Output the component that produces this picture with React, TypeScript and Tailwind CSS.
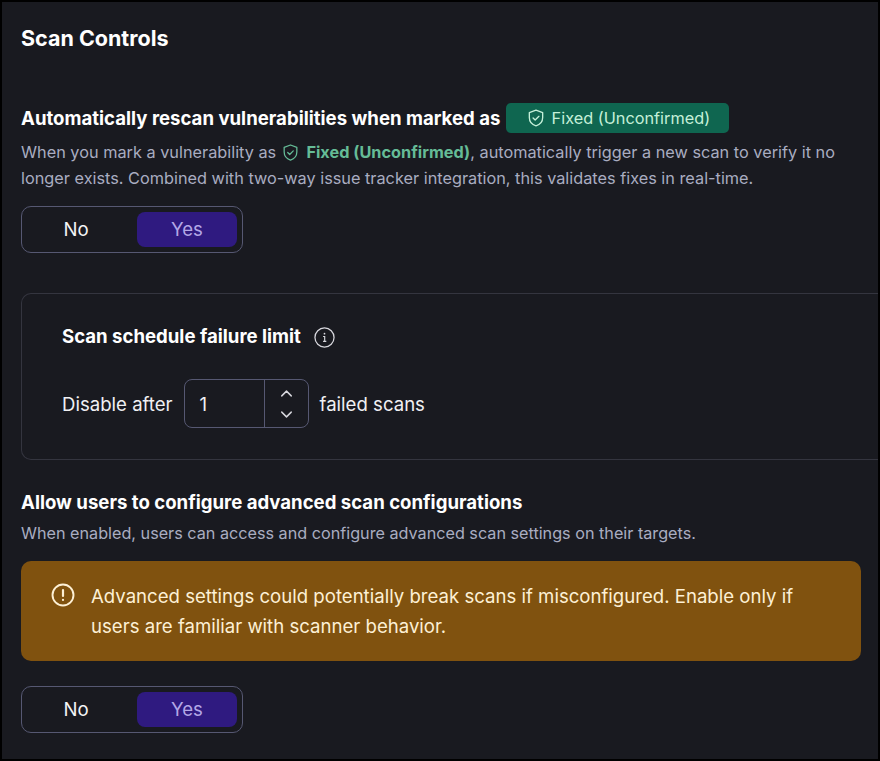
import { ChevronDown, ChevronUp } from "lucide-react";

function ShieldCheck({ className }: { className?: string }) {
  return (
    <svg viewBox="0 0 24 24" fill="none" stroke="currentColor" strokeWidth="1.6" strokeLinecap="round" strokeLinejoin="round" className={className}>
      <path d="M12 2.500l8 3v6c0 5-3.400 8.600-8 10-4.600-1.400-8-5-8-10v-6z" />
      <path d="M8.500 12l2.500 2.500 4.500-4.500" />
    </svg>
  );
}

function YesNo() {
  return (
    <div className="flex h-[47px] w-[222px] items-center rounded-[10px] border border-[#565872] p-[5px] text-[18.6px] leading-none">
      <div className="flex h-[35px] flex-1 items-center justify-center pr-[12px] text-[#f4f4f6]">No</div>
      <div className="flex h-[35px] w-[100px] items-center justify-center rounded-lg bg-[#2f1a80] text-[#b3a7e6]">Yes</div>
    </div>
  );
}

export default function App() {
  return (
    <div className="h-[761px] w-[880px] overflow-hidden border-2 border-black bg-[#191a20] font-['Inter','Noto_Sans',sans-serif]">
      <div className="pl-[19px] pt-[23px]">
        <h2 className="h-[26px] text-[21.5px] font-bold leading-[26px] text-white">Scan Controls</h2>

        <div className="mt-[52px] flex h-[30px] items-center gap-[6px]">
          <span className="whitespace-nowrap pt-[1px] text-[18.6px] font-bold text-white">Automatically rescan vulnerabilities when marked as</span>
          <span className="flex h-[30px] w-[223px] shrink-0 items-center justify-center gap-[6px] rounded-[5px] bg-[#0f6650] text-[16.3px] text-[#c5f0d9]">
            <ShieldCheck className="size-[20px]" />
            Fixed (Unconfirmed)
          </span>
        </div>
        <p className="mt-[6px] w-[830px] text-[16.3px] leading-[26px] text-[#a9adc1]">
          When you mark a vulnerability as{" "}
          <ShieldCheck className="mr-[2px] inline size-[19px] align-[-4px] text-[#65bc97]" />{" "}
          <span className="font-bold text-[#65bc97]">Fixed (Unconfirmed)</span>, automatically trigger a new scan to verify it no longer exists. Combined with two-way issue tracker integration, this validates fixes in real-time.
        </p>

        <div className="mt-[15px]">
          <YesNo />
        </div>

        <div className="mt-[40px] h-[167px] rounded-l-[10px] border border-r-0 border-[#34353f] pl-[40px] pt-[29px]">
          <div className="flex h-[28px] items-center gap-[13px]">
            <span className="text-[18.6px] font-bold text-white">Scan schedule failure limit</span>
            <svg viewBox="0 0 22 22" fill="none" stroke="currentColor" className="size-[21px] text-[#d8d8de]">
              <circle cx="11" cy="11" r="10" strokeWidth="1.300" />
              <path d="M9.500 10h1.700v5M9.500 15h3.400" strokeWidth="1.200" />
              <circle cx="11" cy="7" r="0.900" fill="currentColor" stroke="none" />
            </svg>
          </div>
          <div className="mt-[28px] flex items-center text-[18.6px] text-[#f0f0f3]">
            <span className="pt-[2px]">Disable after</span>
            <div className="ml-[11px] flex h-[49px] w-[125px] rounded-lg border border-[#565872]">
              <div className="flex w-[79px] items-center pl-[15px] pt-[2px]">1</div>
              <div className="flex flex-1 flex-col items-center justify-center gap-[2px] border-l border-[#565872] text-[#d8d8de]">
                <ChevronUp className="size-[19px]" strokeWidth={1.800} />
                <ChevronDown className="size-[19px]" strokeWidth={1.800} />
              </div>
            </div>
            <span className="ml-[11px] pt-[2px]">failed scans</span>
          </div>
        </div>

        <h3 className="mt-[29px] text-[18.6px] font-bold leading-[26px] text-white">Allow users to configure advanced scan configurations</h3>
        <p className="mt-[5px] text-[16.2px] leading-[26px] text-[#a9adc1]">When enabled, users can access and configure advanced scan settings on their targets.</p>

        <div className="mt-[15px] flex h-[100px] w-[840px] gap-[16px] rounded-[10px] bg-[#80520f] pl-[30px] pr-[50px] pt-[20px] text-[#fdf0d5]">
          <svg viewBox="0 0 24 24" fill="none" stroke="currentColor" strokeWidth="1.900" strokeLinecap="round" className="mt-[2px] size-[24px] shrink-0">
            <circle cx="12" cy="12" r="10.500" />
            <path d="M12 7v6M12 16.800v.1" strokeWidth="2.200" />
          </svg>
          <p className="text-[18.6px] leading-[30px]">Advanced settings could potentially break scans if misconfigured. Enable only if users are familiar with scanner behavior.</p>
        </div>

        <div className="mt-[25px]">
          <YesNo />
        </div>
      </div>
    </div>
  );
}
